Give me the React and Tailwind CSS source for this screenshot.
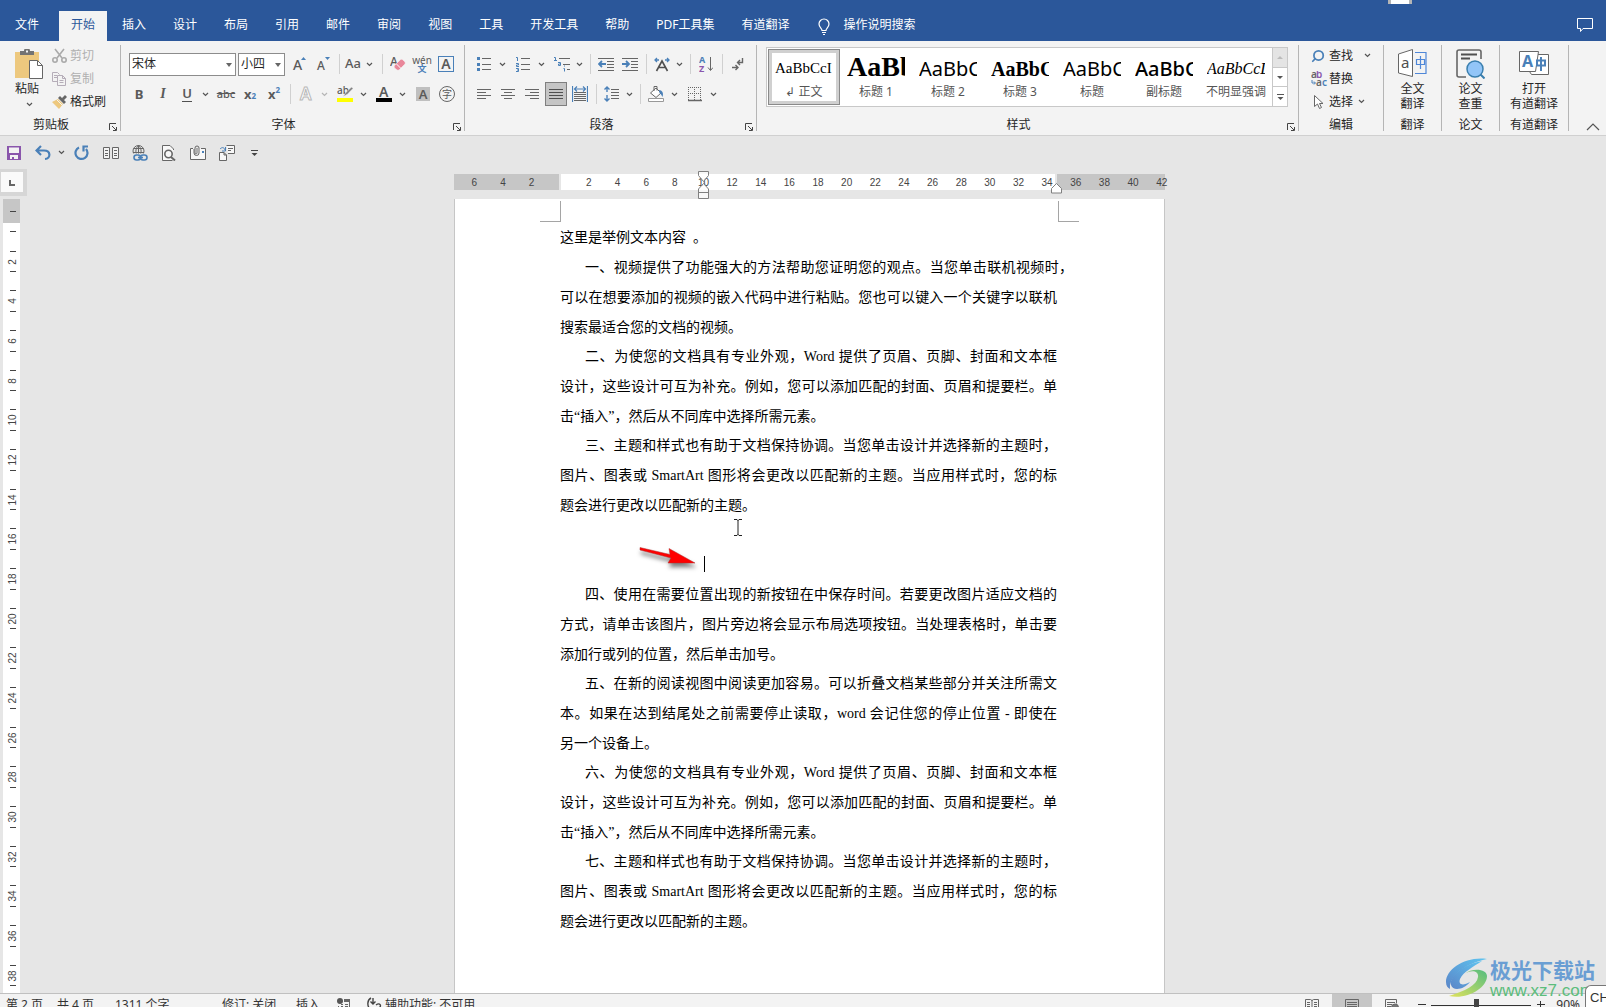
import { Search } from 'lucide-react'

const TABS = ['插入', '设计', '布局', '引用', '邮件', '审阅', '视图', '工具', '开发工具', '帮助', 'PDF工具集', '有道翻译']

const STYLES = [
  { name: '标题 1', sample: 'AaBb', cls: 'font-[Liberation_Serif] font-bold text-[28px] leading-[30px]' },
  { name: '标题 2', sample: 'AaBbC', cls: 'text-xl leading-[34px]' },
  { name: '标题 3', sample: 'AaBbC', cls: 'font-[Liberation_Serif] font-bold text-xl leading-[34px]' },
  { name: '标题', sample: 'AaBbC', cls: 'text-xl leading-[34px]' },
  { name: '副标题', sample: 'AaBbC', cls: 'text-xl leading-[34px] font-medium' },
  { name: '不明显强调', sample: 'AaBbCcL', cls: 'font-[Liberation_Serif] italic text-base leading-[34px] text-[#404040]' },
]

const SECOND = [
  '为使您的文档具有专业外观，Word 提供了页眉、页脚、封面和文本框',
  '设计，这些设计可互为补充。例如，您可以添加匹配的封面、页眉和提要栏。单',
  '击“插入”，然后从不同库中选择所需元素。',
]
const THIRD = [
  '主题和样式也有助于文档保持协调。当您单击设计并选择新的主题时，',
  '图片、图表或 SmartArt 图形将会更改以匹配新的主题。当应用样式时，您的标',
  '题会进行更改以匹配新的主题。',
]

const BEFORE_CARET = [
  [
    '一、视频提供了功能强大的方法帮助您证明您的观点。当您单击联机视频时，',
    '可以在想要添加的视频的嵌入代码中进行粘贴。您也可以键入一个关键字以联机',
    '搜索最适合您的文档的视频。',
  ],
  ['二、' + SECOND[0], SECOND[1], SECOND[2]],
  ['三、' + THIRD[0], THIRD[1], THIRD[2]],
]
const AFTER_CARET = [
  [
    '四、使用在需要位置出现的新按钮在中保存时间。若要更改图片适应文档的',
    '方式，请单击该图片，图片旁边将会显示布局选项按钮。当处理表格时，单击要',
    '添加行或列的位置，然后单击加号。',
  ],
  [
    '五、在新的阅读视图中阅读更加容易。可以折叠文档某些部分并关注所需文',
    '本。如果在达到结尾处之前需要停止读取，word 会记住您的停止位置 - 即使在',
    '另一个设备上。',
  ],
  ['六、' + SECOND[0], SECOND[1], SECOND[2]],
  ['七、' + THIRD[0], THIRD[1], THIRD[2]],
]

const H_MARKS = [6, 4, 2, '', 2, 4, 6, 8, 10, 12, 14, 16, 18, 20, 22, 24, 26, 28, 30, 32, 34, 36, 38, 40, 42]
const V_MARKS = Array.from({ length: 19 }, (_, i) => (i + 1) * 2)

const GRAY = '#666666'
const BLUE = '#4a80b8'
const PURPLE = '#8a56ac'

function Svg({ w = 16, h = 16, children, className = '' }) {
  return (
    <svg width={w} height={h} viewBox={`0 0 ${w} ${h}`} fill="none" stroke={GRAY} className={`shrink-0 ${className}`} aria-hidden="true">
      {children}
    </svg>
  )
}

function Tool({ label, children, className = 'w-6' }) {
  return (
    <button aria-label={label} className={`h-6 shrink-0 flex items-center justify-center text-[#5a5a5a] ${className}`}>
      {children}
    </button>
  )
}

function Caret({ className = 'w-[15px]', color = '#555555' }) {
  return (
    <span className={`shrink-0 flex justify-center pr-0.5 ${className}`}>
      <svg width="7" height="5" viewBox="0 0 7 5" fill="none" stroke={color} strokeWidth="1.2" aria-hidden="true">
        <path d="M1 1l2.500 2.500L6 1" />
      </svg>
    </span>
  )
}

const Sep = () => (
  <span className="w-2 h-5 shrink-0 flex justify-center">
    <span className="w-px bg-[#d0d0d0]" />
  </span>
)

const Divider = () => <div className="w-px my-1 shrink-0 bg-[#b5b5b5]" />

function Group({ label, launcher, className = '', children }) {
  return (
    <section className={`flex flex-col shrink-0 pb-0.5 ${className}`}>
      <div className="flex-1">{children}</div>
      <div className="flex items-center h-4 text-[#262626]">
        <span className="flex-1 text-center whitespace-nowrap">{label}</span>
        {launcher && (
          <button aria-label={`${label}设置`} className="w-[18px] flex justify-end pr-[3px] pt-1">
            <Svg w={8} h={8}>
              <path d="M.5 7V.5H7M3 3l4 4M7.500 4v3.500H4" stroke="#444" />
            </Svg>
          </button>
        )}
      </div>
    </section>
  )
}

function Combo({ label, value, className }) {
  return (
    <div className={`relative h-[23px] ${className}`}>
      <select aria-label={label} defaultValue={value} className="appearance-none w-full h-full bg-white border border-[#8c8c8c] pl-0.5 text-xs text-[#262626] rounded-none">
        <option>{value}</option>
      </select>
      <span className="absolute right-1 top-2.5 border-x-3 border-t-4 border-x-transparent border-t-[#666]" />
    </div>
  )
}

function Lines({ xs, color = GRAY }) {
  return xs.map(([x1, x2, y]) => <path key={y} d={`M${x1} ${y}.5H${x2}`} stroke={color} />)
}

function SmallCommand({ icon, label, caret, disabled }) {
  return (
    <button disabled={disabled} className={`flex items-center h-[23px] whitespace-nowrap ${disabled ? 'text-[#b0b0b0]' : 'text-[#262626]'}`}>
      <span className="w-[18px] flex justify-start">{icon}</span>
      {label}
      {caret}
    </button>
  )
}

function BigCommand({ icon, lines }) {
  return (
    <button className="w-full flex flex-col items-center pt-2 text-[#262626]">
      <span className="h-8 flex items-start">{icon}</span>
      {lines.map((line) => (
        <span key={line} className="leading-[15px] whitespace-nowrap">{line}</span>
      ))}
    </button>
  )
}

function TitleTabs() {
  return (
    <header className="relative shrink-0 flex items-end h-[41px] bg-[#2b579a] text-white">
      <nav className="flex gap-[3px] pl-[3px]">
        <button className="h-[30px] px-3 pb-0.5 mr-[5px]">文件</button>
        <button className="h-[30px] px-3 pb-0.5 bg-[#f3f3f3] text-[#2b579a]">开始</button>
        {TABS.map((tab) => (
          <button key={tab} className="h-[30px] px-3 pb-0.5 whitespace-nowrap">{tab}</button>
        ))}
        <button className="h-[30px] pl-3 pb-0.5 flex items-center gap-[11px] whitespace-nowrap">
          <Svg w={16} h={18} className="mt-1">
            <path d="M6 12.500c0-2-3-3-3-6.500a5 5 0 0 1 10 0c0 3.500-3 4.500-3 6.500zM6 14.500h4M7 16.500h2" stroke="#fff" strokeWidth="1.2" />
          </Svg>
          操作说明搜索
        </button>
      </nav>
      <button aria-label="批注" className="ml-auto mr-3 h-8 flex items-center">
        <Svg w={18} h={16}>
          <path d="M1.500 1.500h15v10H7l-2.500 3v-3h-3z" stroke="#fff" />
        </Svg>
      </button>
      <span className="absolute top-0 right-[194px] w-6 h-1 bg-white border-x-3 border-[#b5b5b5]" />
    </header>
  )
}

function ClipboardGroup() {
  return (
    <Group label="剪贴板" launcher className="w-[120px]">
      <div className="flex">
        <button className="w-[52px] pl-[15px] pt-2 flex flex-col items-start text-[#262626]">
          <Svg w={30} h={31}>
            <path d="M0 3h24v26H0z" fill="#edc87e" stroke="none" />
            <path d="M5 6V2h4a3 3 0 0 1 6 0h4v4z" fill="#737373" stroke="none" />
            <path d="M11 1.500h2v2h-2z" fill="#f3f3f3" stroke="none" />
            <path d="M14.500 11.500h8l5 5v13h-13z" fill="#fff" />
            <path d="M22.500 11.500v5h5" />
          </Svg>
          <span className="leading-[18px]">粘贴</span>
          <Caret className="w-[30px] pt-1" />
        </button>
        <div className="pt-[3px]">
          <SmallCommand
            disabled
            label="剪切"
            icon={
              <Svg>
                <g stroke="#aaa" strokeWidth="1.600">
                  <path d="M3 1l7 9M12 1L5 10" />
                  <circle cx="3" cy="12" r="2.200" />
                  <circle cx="12" cy="12" r="2.200" />
                </g>
              </Svg>
            }
          />
          <SmallCommand
            disabled
            label="复制"
            icon={
              <Svg>
                <path d="M5 10.500H.500V1.500h5l2 2M2 4.500h3M2 6.500h3M5.500 4.500h5l3 3v7h-8zM10.500 4.500v3h3M7.500 9.500h4M7.500 11.500h4" stroke="#b5adb8" />
              </Svg>
            }
          />
          <SmallCommand
            label="格式刷"
            icon={
              <Svg>
                <path d="M0 8l6-3 5 5-4 5z" fill="#edc87e" stroke="none" />
                <path d="M6 4l2-2 6 6-2 2zM10 4l3-3 2 2-3 3z" fill="#666" stroke="none" />
                <path d="M5 6l5 5" stroke="#f3f3f3" />
              </Svg>
            }
          />
        </div>
      </div>
    </Group>
  )
}

function FontGroup() {
  return (
    <Group label="字体" launcher className="w-[343px]">
      <div className="flex items-center h-6 mt-[11px] pl-2">
        <Combo label="字体名称" value="宋体" className="w-[107px] mr-0.5" />
        <Combo label="字号" value="小四" className="w-[47px] mr-0.5" />
        <Tool label="增大字号">
          <Svg>
            <text x="2" y="14" fontSize="14" fontWeight="500" fill="#5a5a5a" stroke="none">A</text>
            <path d="M10 4l2.500-3L15 4z" fill={BLUE} stroke="none" />
          </Svg>
        </Tool>
        <Tool label="减小字号">
          <Svg>
            <text x="2" y="14" fontSize="12" fontWeight="500" fill="#5a5a5a" stroke="none">A</text>
            <path d="M10 1l2.500 3L15 1z" fill={BLUE} stroke="none" />
          </Svg>
        </Tool>
        <Sep />
        <Tool label="更改大小写" className="w-5 text-[13px] font-medium">Aa</Tool>
        <Caret />
        <Sep />
        <Tool label="清除所有格式">
          <Svg>
            <text x="0" y="10" fontSize="12" fontWeight="500" fill="#5a5a5a" stroke="none">A</text>
            <path d="M5 9l5-5c1-1 2-1 3 0l1.500 1.500c1 1 1 2 0 3l-5 5c-1 1-2 1-3 0L4.500 12c-.5-1-.5-2 .5-3z" fill="#e9879a" stroke="#f3f3f3" strokeWidth=".600" />
            <path d="M6.500 8l4.500 4.500" stroke="#fff" />
          </Svg>
        </Tool>
        <Tool label="拼音指南" className="w-6 flex-col">
          <span className="text-[10px] leading-2">wén</span>
          <span className="text-[9px] leading-[9px] font-bold text-[#4a80b8]">文</span>
        </Tool>
        <Tool label="字符边框">
          <span className="w-4 h-4 border border-[#4a80b8] text-sm leading-[14px] font-semibold">A</span>
        </Tool>
      </div>
      <div className="flex items-center h-6 mt-1.5 pl-1.5 text-sm">
        <Tool label="加粗"><b className="text-[13px]">B</b></Tool>
        <Tool label="倾斜"><i className="font-[Liberation_Serif] font-bold">I</i></Tool>
        <Tool label="下划线"><span className="text-[13px] font-semibold border-b border-[#505050] leading-[15px]">U</span></Tool>
        <Caret />
        <Tool label="删除线"><s className="text-[11px] font-medium">abc</s></Tool>
        <Tool label="下标"><b className="text-[13px]">x</b><sub className="text-[8px] text-[#4a80b8] font-bold">2</sub></Tool>
        <Tool label="上标"><b className="text-[13px]">x</b><sup className="text-[8px] text-[#4a80b8] font-bold">2</sup></Tool>
        <Sep />
        <Tool label="文本效果">
          <Svg><text x="2" y="14" fontSize="17" fontWeight="600" fill="#fff" stroke="#b8b8b8">A</text></Svg>
        </Tool>
        <Caret color="#b5b5b5" />
        <Tool label="突出显示">
          <Svg>
            <text x="0" y="8" fontSize="10" fontWeight="500" fill="#5a5a5a" stroke="none">ab</text>
            <path d="M14.500 1L9 6.500l-3 4 4-2L16 2.500z" fill="#808080" stroke="#f3f3f3" strokeWidth=".500" />
            <path d="M0 12h16v4H0z" fill="#ff0" stroke="none" />
          </Svg>
        </Tool>
        <Caret />
        <Tool label="字体颜色">
          <Svg>
            <text x="3" y="11" fontSize="14" fontWeight="600" fill="#5a5a5a" stroke="none">A</text>
            <path d="M0 12h16v4H0z" fill="#000" stroke="none" />
          </Svg>
        </Tool>
        <Caret />
        <Tool label="字符底纹"><span className="w-3.5 h-3.5 bg-[#bfbfbf] text-[13px] leading-[14px] font-semibold">A</span></Tool>
        <Tool label="带圈字符"><span className="w-4 h-4 rounded-full border border-[#666] text-[10px] leading-[14px]">字</span></Tool>
      </div>
    </Group>
  )
}

function ParagraphGroup() {
  return (
    <Group label="段落" launcher className="w-[291px]">
      <div className="flex items-center h-6 mt-[11px] pl-[7px]">
        <Tool label="项目符号">
          <Svg w={14}>
            <Lines xs={[[5, 14, 2], [5, 14, 8], [5, 14, 13]]} />
            <path d="M0 1h3v3H0zM0 7h3v3H0zM0 12h3v3H0z" fill={BLUE} stroke="none" />
          </Svg>
        </Tool>
        <Caret />
        <Tool label="编号">
          <Svg w={14}>
            <Lines xs={[[5, 14, 2], [5, 14, 8], [5, 14, 13]]} />
            <path d="M0 1.500h1.500V5M0 7.500h2.500v1.500H.500v1.500h2.500M0 12.500h2.500v3H0M1 14h1.500" stroke={BLUE} />
          </Svg>
        </Tool>
        <Caret />
        <Tool label="多级列表">
          <Svg>
            <Lines xs={[[5, 16, 2], [9, 16, 8], [13, 16, 13]]} />
            <path d="M0 1.500h1.500V4.500M0 4.500h3M4 6.500h2.500v3H4.500V8h2M10.500 9.500v1M9.500 12.500h1v3" stroke={BLUE} />
          </Svg>
        </Tool>
        <Caret className="w-3" />
        <Sep />
        <Tool label="减少缩进量">
          <Svg>
            <Lines xs={[[0, 16, 2], [9, 16, 5], [9, 16, 8], [9, 16, 11], [0, 16, 14]]} />
            <path d="M8 8H1M4 5L1 8l3 3" stroke={BLUE} strokeWidth="1.800" />
          </Svg>
        </Tool>
        <Tool label="增加缩进量">
          <Svg>
            <Lines xs={[[0, 16, 2], [9, 16, 5], [9, 16, 8], [9, 16, 11], [0, 16, 14]]} />
            <path d="M0 8h7M4 5l3 3-3 3" stroke={BLUE} strokeWidth="1.800" />
          </Svg>
        </Tool>
        <Sep />
        <Tool label="中文版式">
          <Svg>
            <path d="M5 4H1M3 2L1 4l2 2M11 4h4M13 2l2 2-2 2" stroke={BLUE} strokeWidth="1.300" />
            <path d="M2.500 15L8 5l5.500 10M5 11.500h6" stroke="#505050" strokeWidth="1.600" />
          </Svg>
        </Tool>
        <Caret className="w-3" />
        <Sep />
        <Tool label="排序">
          <Svg w={14}>
            <text x="0" y="7" fontSize="9" fontWeight="700" fill={BLUE} stroke="none">A</text>
            <text x="0" y="16" fontSize="9" fontWeight="700" fill={PURPLE} stroke="none">Z</text>
            <path d="M11.500 1v13M9 11.500l2.500 3 2.500-3" />
          </Svg>
        </Tool>
        <Sep />
        <Tool label="显示编辑标记">
          <Svg w={12}>
            <path d="M10.500 2v4.500H6M8 4L5.500 6.500 8 9M0 11.500h6M3.500 9L6 11.500 3.500 14" strokeWidth="1.400" />
          </Svg>
        </Tool>
      </div>
      <div className="flex items-center h-6 mt-1.5 pl-[7px]">
        <Tool label="左对齐"><Svg w={14}><Lines xs={[[0, 14, 3], [0, 9, 6], [0, 14, 9], [0, 9, 12]]} /></Svg></Tool>
        <Tool label="居中"><Svg w={14}><Lines xs={[[0, 14, 3], [3, 11, 6], [0, 14, 9], [3, 11, 12]]} /></Svg></Tool>
        <Tool label="右对齐"><Svg w={14}><Lines xs={[[0, 14, 3], [5, 14, 6], [0, 14, 9], [5, 14, 12]]} /></Svg></Tool>
        <Tool label="两端对齐" className="w-[22px] mx-px bg-[#c5c5c5] border border-[#7f7f7f]">
          <Svg w={14}><Lines xs={[[0, 14, 3], [0, 14, 6], [0, 14, 9], [0, 14, 12]]} color="#505050" /></Svg>
        </Tool>
        <Tool label="分散对齐">
          <Svg>
            <path d="M.500 0v16M15.500 0v16M2 3h12M5 .500L2.500 3 5 5.500M11 .500L13.500 3 11 5.500" stroke={BLUE} strokeWidth="1.200" />
            <Lines xs={[[2, 14, 6], [2, 14, 8], [2, 14, 10], [2, 14, 12], [2, 14, 14]]} />
          </Svg>
        </Tool>
        <Sep />
        <Tool label="行距">
          <Svg>
            <path d="M3 1v5M.500 3.500L3 1l2.500 2.500M3 9v6M.500 12.500L3 15l2.500-2.500" stroke={BLUE} strokeWidth="1.400" />
            <Lines xs={[[7, 15, 3], [7, 15, 6], [7, 15, 9], [7, 15, 12]]} />
          </Svg>
        </Tool>
        <Caret className="w-3" />
        <Sep />
        <Tool label="底纹">
          <Svg>
            <path d="M2.500 7L8 2l5 5-5 4.500zM6 5V.500h3v4" fill="#fff" />
            <path d="M11 4c3 0 5 3 3.500 7-1-1-1-3-3-4z" fill={BLUE} stroke="none" />
            <path d="M.500 12.500h15v3H.500z" fill="#fff" stroke="#999" />
          </Svg>
        </Tool>
        <Caret />
        <Tool label="边框">
          <Svg w={14}>
            <path d="M.500 1v13M6.500 1v13M12.500 1v13M0 1.500h13M0 7.500h13" strokeDasharray="1 1" />
            <path d="M0 14.500h14" strokeWidth="1.500" />
          </Svg>
        </Tool>
        <Caret />
      </div>
    </Group>
  )
}

function StyleGroup() {
  return (
    <Group label="样式" launcher className="w-[541px]">
      <div className="flex h-[60px] mt-1.5 ml-[9px] mr-[10px] bg-white border border-[#c8c8c8] text-[#555]">
        <button className="w-[72px] shrink-0 px-[3px] pb-0.5 my-px ml-px border border-[#8a8a8a] ring-3 ring-inset ring-[#d0d0d0]">
          <span className="block w-[58px] h-8 ml-[3px] overflow-hidden whitespace-nowrap text-left font-[Liberation_Serif] text-[15px] leading-8 text-black">AaBbCcI</span>
          <span className="block leading-4">↲ 正文</span>
        </button>
        {STYLES.map(({ name, sample, cls }) => (
          <button key={name} className="w-[72px] shrink-0 px-[7px] pb-0.5">
            <span className={`block h-8 overflow-hidden whitespace-nowrap text-left text-black ${cls}`}>{sample}</span>
            <span className="flex justify-center leading-4 whitespace-nowrap">{name}</span>
          </button>
        ))}
        <div className="flex-1 flex flex-col border-l border-[#c8c8c8]">
          <button aria-label="上一行" className="flex-1 flex items-center justify-center bg-[#e4e4e4]">
            <Svg w={6} h={3}><path d="M0 3l3-3 3 3z" fill="#bbb" stroke="none" /></Svg>
          </button>
          <button aria-label="下一行" className="flex-1 flex items-center justify-center border-y border-[#c8c8c8]">
            <Svg w={6} h={3}><path d="M0 0l3 3 3-3z" fill="#555" stroke="none" /></Svg>
          </button>
          <button aria-label="其他" className="flex-1 flex items-center justify-center">
            <Svg w={7} h={6}><path d="M.500 3l3 3 3-3z" fill="#555" stroke="none" /><path d="M0 .500h7" stroke="#555" /></Svg>
          </button>
        </div>
      </div>
    </Group>
  )
}

function EditGroup() {
  return (
    <Group label="编辑" className="w-[84px]">
      <div className="pl-3 pt-[3px]">
        <SmallCommand label="查找" icon={<Search size={14} strokeWidth={3} color={BLUE} className="-scale-x-100" />} caret={<Caret className="w-[30px]" />} />
        <SmallCommand
          label="替换"
          icon={
            <Svg w={17}>
              <g fontSize="10" fontWeight="600" stroke="none">
                <text x="0" y="7" fill="#666">a</text><text x="5" y="7" fill={PURPLE}>b</text>
                <text x="5" y="15" fill="#666">a</text><text x="11" y="15" fill={BLUE}>c</text>
              </g>
              <path d="M1 9v3h3M3 10.500L4.500 12 3 13.500" stroke={BLUE} />
            </Svg>
          }
        />
        <SmallCommand
          label="选择"
          icon={<Svg><path d="M3.500 1.500v11l3-2.500 2 4.500 2-1-2-4h3.500z" fill="#fff" /></Svg>}
          caret={<Caret className="w-[18px]" />}
        />
      </div>
    </Group>
  )
}

function Ribbon() {
  return (
    <div className="flex shrink-0 h-[95px] bg-[#f3f3f3] border-b border-[#d0d0d0]">
      <ClipboardGroup />
      <Divider />
      <FontGroup />
      <Divider />
      <ParagraphGroup />
      <Divider />
      <StyleGroup />
      <Divider />
      <EditGroup />
      <Divider />
      <Group label="翻译" className="w-[57px]">
        <BigCommand
          lines={['全文', '翻译']}
          icon={
            <Svg w={29} h={29}>
              <path d="M.500 5l14-4.500v27L.500 24z" fill="#fff" />
              <text x="3" y="19" fontSize="15" fill="#505050" stroke="none">a</text>
              <path d="M17 3.500h11v21H17M18.500 10.500h8v5h-8zM22.500 7v13" stroke="#4f87d8" strokeWidth="1.200" />
            </Svg>
          }
        />
      </Group>
      <Divider />
      <Group label="论文" className="w-[57px]">
        <BigCommand
          lines={['论文', '查重']}
          icon={
            <Svg w={29} h={30}>
              <path d="M10 28H3a2 2 0 0 1-2-2V3a2 2 0 0 1 2-2h20a2 2 0 0 1 2 2v7" strokeWidth="1.600" />
              <path d="M5 5.500h16M5 9.500h9" stroke="#505050" strokeWidth="1.800" />
              <circle cx="19" cy="20" r="8" fill="#92c5f8" stroke="#3a7fae" strokeWidth="1.500" />
              <path d="M24.500 25.500l4 4" stroke="#3a7fae" strokeWidth="2" />
            </Svg>
          }
        />
      </Group>
      <Divider />
      <Group label="有道翻译" className="w-[68px]">
        <BigCommand
          lines={['打开', '有道翻译']}
          icon={
            <Svg w={30} h={28}>
              <path d="M12.500 5.500h17v20h-17l-2-3z" fill="#fff" />
              <path d="M.500 2.500h19l-3 20H.500z" fill="#fff" />
              <text x="3" y="18" fontSize="16" fontWeight="700" fill={BLUE} stroke="none">A</text>
              <path d="M18 11.500h8v5h-8zM22 8v14" stroke={BLUE} strokeWidth="2" />
            </Svg>
          }
        />
      </Group>
      <Divider />
      <button aria-label="折叠功能区" className="ml-auto mr-1.5 self-end pb-1">
        <Svg w={14} h={8}><path d="M1 7l6-6 6 6" stroke="#555" strokeWidth="1.200" /></Svg>
      </button>
    </div>
  )
}

function QuickAccess() {
  return (
    <div className="flex shrink-0 items-center h-[33px]">
      <Tool label="保存" className="w-7">
        <Svg w={14} h={14}>
          <path d="M0 0h14v14H0z" fill={PURPLE} stroke="none" />
          <path d="M2 1.500h10V7H2zM3 9h8v4H3z" fill="#f3f3f3" stroke="none" />
          <path d="M5 11h2v3H5z" fill={PURPLE} stroke="none" />
        </Svg>
      </Tool>
      <Tool label="撤消" className="w-[29px]">
        <Svg><path d="M6 1L1.500 5.500 6 10M2 5.500h7c7 0 7 8 1 8.500" stroke={BLUE} strokeWidth="2.200" /></Svg>
      </Tool>
      <Caret className="w-[10px]" />
      <Tool label="重复" className="w-[29px]">
        <Svg><path d="M5 2.500A6 6 0 1 0 12 4M9.500 6.500V1.500H14" stroke={BLUE} strokeWidth="2.200" /></Svg>
      </Tool>
      <Tool label="阅读视图" className="w-[29px]">
        <Svg h={12}><path d="M.500.500h6v11h-6zM9.500.500h6v11h-6zM2 3.500h3M2 6.500h3M2 8.500h3M11 3.500h3M11 6.500h3M11 8.500h3" fill="#f3f3f3" /></Svg>
      </Tool>
      <Tool label="超链接" className="w-[29px]">
        <Svg>
          <circle cx="6.500" cy="6" r="5.500" />
          <path d="M1.500 3.500h10M1 7.500h11M6.500.500v9M6.500.500C3.500 3 3.500 7 4.500 9M6.500.500c3 2.500 3 6.500 2 8.500" />
          <path d="M1 8.500h15V16H1z" fill="#e6e6e6" stroke="none" />
          <rect x="2" y="10" width="6.500" height="5" rx="2.500" stroke={BLUE} strokeWidth="1.600" />
          <rect x="8.500" y="10" width="6.500" height="5" rx="2.500" stroke={BLUE} strokeWidth="1.600" />
          <path d="M6 12.500h5" stroke={BLUE} strokeWidth="1.600" />
        </Svg>
      </Tool>
      <Tool label="打印预览" className="w-[29px]">
        <Svg>
          <path d="M12.500 5V4L9 .500H1.500v15h10" fill="#f8f8f8" />
          <circle cx="7.500" cy="9" r="3.700" strokeWidth="1.600" fill="#f8f8f8" />
          <path d="M10 12l4 3.500" strokeWidth="2" />
        </Svg>
      </Tool>
      <Tool label="邮件附件" className="w-[29px]">
        <Svg>
          <path d="M3 3.500H.500v11h15v-11H11" fill="#f8f8f8" />
          <path d="M4 4v4a2.500 2.500 0 0 0 5 0V3a2 2 0 0 0-4 0v5a1 1 0 0 0 2 0V3" />
          <path d="M12 6h2v2h-2z" fill={BLUE} stroke="none" />
        </Svg>
      </Tool>
      <Tool label="切换窗口" className="w-[29px]">
        <Svg>
          <path d="M7.500.500h8v8H9M9 3.500h5M9 5.500h3M.500 7.500H5l2.500 2.500v5.500h-7zM5 7.500V10h2.500" fill="#f8f8f8" />
          <path d="M1 4c2-2 4-2 5 1M6.500 2v4H3" stroke={BLUE} />
        </Svg>
      </Tool>
      <Tool label="自定义快速访问工具栏" className="w-[27px]">
        <Svg w={7} h={6}><path d="M0 .500h7" stroke="#444" /><path d="M.500 3h6l-3 3z" fill="#444" stroke="none" /></Svg>
      </Tool>
    </div>
  )
}

function HorizontalRuler() {
  return (
    <div className="relative flex gap-0.5 h-4 mt-[5px] text-[10px] leading-[18px] text-[#444] font-[Liberation_Sans]">
      <div className="w-[105px] bg-[#c6c6c6]" />
      <div className="flex-1 bg-white" />
      <div className="w-[108px] bg-[#c6c6c6]" />
      <div className="absolute inset-y-0 left-1.5 -right-[11px] flex">
        {H_MARKS.map((n, i) => (
          <span key={i} className="flex-1 w-0 text-center">{n}</span>
        ))}
      </div>
      <Svg w={12} h={29} className="absolute left-[244px] -top-[3px]">
        <path d="M.500.500h10v4l-5 6-5-6z" fill="#fff" fillOpacity=".7" stroke="#808080" />
        <path d="M5.500 12.500l5 5.500v9.500h-10V18zM.500 21.500h10" fill="#fff" fillOpacity=".7" stroke="#808080" />
      </Svg>
      <Svg w={12} h={12} className="absolute left-[597px] top-[9px]">
        <path d="M5.500.500l5 5v4.500h-10V5.500z" fill="#fff" stroke="#808080" />
      </Svg>
    </div>
  )
}

function VerticalRuler() {
  return (
    <div className="flex flex-col shrink-0 w-[27px] overflow-hidden">
      <button aria-label="制表符" className="shrink-0 flex items-start w-[27px] h-[27px] bg-[#d6d6d6] pt-[3px] pl-px">
        <span className="flex items-center justify-center w-[22px] h-5 bg-[#fafafa]">
          <Svg w={6} h={6} className="mt-0.5"><path d="M1 0v5h5" stroke="#666" strokeWidth="2" /></Svg>
        </span>
      </button>
      <div className="flex-1 min-h-0 flex flex-col w-[17px] mt-[3px] ml-[3px] overflow-hidden bg-white text-[#444] font-[Liberation_Sans]">
        <div className="shrink-0 h-6 flex items-center justify-center bg-[#c6c6c6] pl-[3px] mb-2">
          <span className="w-1.5 h-px bg-[#444]" />
        </div>
        <div className="shrink-0 h-[11px] flex justify-center pl-[3px]">
          <span className="w-1.5 h-px bg-[#444]" />
        </div>
        {V_MARKS.map((n) => (
          <div key={n} className="shrink-0 h-10 nth-[3n]:h-[39px] flex flex-col items-center justify-between py-[9px] pl-[3px]">
            <span className="w-1.5 h-px bg-[#444]" />
            <span className="text-[10px] leading-3 -rotate-90">{n}</span>
            <span className="w-1.5 h-px bg-[#444]" />
          </div>
        ))}
      </div>
    </div>
  )
}

// Full lines are justified, the last line of a paragraph keeps its own width
function Paragraph({ lines }) {
  return (
    <p>
      {lines.map((line, i) => (
        <span
          key={i}
          className={`block whitespace-nowrap ${i === 0 ? 'pl-[25px]' : ''} ${
            i === lines.length - 1 ? 'leading-[29px]' : '[text-align-last:justify]'
          } ${line.startsWith('一') ? '-mr-4' : ''}`}
        >
          {line}
        </span>
      ))}
    </p>
  )
}

function Page() {
  return (
    <article className="relative flex-1 mt-[9px] bg-white border-x border-[#c6c6c6] text-black">
      <div className="flex justify-between h-6 pt-0.5 px-[85px]">
        <span className="w-[21px] h-[21px] border-r border-b border-[#a5a5a5]" />
        <span className="w-[21px] h-[21px] border-l border-b border-[#a5a5a5]" />
      </div>
      <div className="pl-[105px] pr-[107px] text-sm leading-[30px] font-['Liberation_Serif','Noto_Sans_CJK_SC',serif]">
        <p>这里是举例文本内容&nbsp; 。</p>
        {BEFORE_CARET.map((lines, i) => <Paragraph key={i} lines={lines} />)}
        <div className="h-[60px] pt-9 pl-[144px]">
          <div className="w-px h-4 bg-black" />
        </div>
        {AFTER_CARET.map((lines, i) => <Paragraph key={i} lines={lines} />)}
      </div>
      <svg width="66" height="32" viewBox="0 0 66 32" className="absolute left-[182px] top-[346px] drop-shadow-[1px_4px_2px_rgba(0,0,0,0.5)]" aria-hidden="true">
        <path d="M3 2.500l30 7-1-6L58 18l-27 0 3-5L3 5z" fill="#f00" stroke="#a33" strokeWidth=".5" />
      </svg>
      <Svg w={8} h={17} className="absolute left-[279px] top-[320px]">
        <path d="M0 .500h3l1 1 1-1h3M0 16.500h3l1-1 1 1h3M4 1v15" stroke="#222" />
      </Svg>
    </article>
  )
}

function StatusBar() {
  return (
    <footer className="shrink-0 h-[14px] overflow-hidden bg-[#f3f3f3] border-t border-[#c0c0c0] text-[#333]">
      <div className="flex items-center h-[22px] whitespace-nowrap">
        <span className="w-[51px] pl-1.5">第 2 页</span>
        <span className="w-[58px] pl-1.5">共 4 页</span>
        <span className="w-[107px] pl-1.5">1311 个字</span>
        <span className="w-[74px] pl-1.5">修订: 关闭</span>
        <span className="w-[47px] pl-1.5">插入</span>
        <Svg w={14} h={14}>
          <circle cx="3" cy="3" r="3" fill="#555" stroke="none" />
          <path d="M7 1.500h5.500v11h-11V8M4 6.500h2M8 6.500h3M4 8.500h2M8 8.500h3M4 10.500h2M8 10.500h3" stroke="#666" />
          <path d="M7 1h6v3H7z" fill="#666" stroke="none" />
        </Svg>
        <span className="flex items-center gap-0.5 ml-4">
          <Svg>
            <path d="M4 1C0 3 0 9 3 12M6 1v6M3.500 4.500L6 7l2.500-2.500M9 8c4-3 6 1 3 3-1 1-1 1-1 3" stroke="#444" strokeWidth="1.400" />
          </Svg>
          辅助功能: 不可用
        </span>
        <div className="ml-auto flex items-center h-full pr-[26px]">
          <Tool label="阅读视图" className="w-10">
            <Svg w={14} h={14}><path d="M.500 1.500h5l1.500 1 1.500-1h5v11h-5L7 13l-1.500-.500h-5zM7 2v11M2 4.500h3M2 6.500h3M2 8.500h3M9 4.500h3M9 6.500h3M9 8.500h3" /></Svg>
          </Tool>
          <Tool label="页面视图" className="w-10 bg-[#c6c6c6]">
            <Svg w={14} h={14}><path d="M.500 1.500h13v12H.500zM2 4.500h10M2 6.500h10M2 8.500h10M2 10.500h10" /></Svg>
          </Tool>
          <Tool label="Web 版式视图" className="w-10">
            <Svg w={14} h={14}>
              <path d="M6 12.500H.500v-11h11v4M2 4.500h8M2 6.500h5M2 8.500h4" />
              <circle cx="10" cy="9.500" r="3.500" fill="#777" />
            </Svg>
          </Tool>
          <Tool label="缩小" className="w-[19px]"><Svg w={8} h={8}><path d="M0 3.500h8" stroke="#333" /></Svg></Tool>
          <input
            type="range"
            aria-label="显示比例"
            min="10"
            max="190"
            defaultValue="90"
            className="appearance-none w-[100px] h-px bg-[#333] [&::-webkit-slider-thumb]:appearance-none [&::-webkit-slider-thumb]:w-[5px] [&::-webkit-slider-thumb]:h-3 [&::-webkit-slider-thumb]:bg-[#444]"
          />
          <Tool label="放大" className="w-[19px]"><Svg w={8} h={8}><path d="M0 3.500h8M3.500 0v8" stroke="#333" /></Svg></Tool>
          <span className="pl-1.5">90%</span>
        </div>
      </div>
    </footer>
  )
}

function Watermark() {
  return (
    <div className="absolute right-[11px] bottom-2 flex items-center gap-0.5">
      <svg width="42" height="42" viewBox="0 0 42 42" aria-hidden="true">
        <defs>
          <linearGradient id="sweep" x1="0" y1="1" x2="1" y2="0">
            <stop offset="0" stopColor="#5b86c8" />
            <stop offset="1" stopColor="#5ec4f0" />
          </linearGradient>
          <linearGradient id="leaf" x1="0" y1="1" x2="1" y2="0">
            <stop offset="0" stopColor="#e0e25c" />
            <stop offset="1" stopColor="#55bd80" />
          </linearGradient>
        </defs>
        <path d="M41 2C20-1 0 12 0 25c0 4 2 6 4 7C3 20 17 7 41 2z" fill="url(#sweep)" />
        <path d="M36 4C18 7 3 19 5 28c2 7 14 4 19-3-7 4-12 3-10-3C17 15 27 10 36 4z" fill="url(#sweep)" />
        <path d="M18 17c8-5 15-3 14 3C31 28 19 34 3 39c18 4 38-8 38-20 0-7-14-9-23-2z" fill="url(#leaf)" />
      </svg>
      <div className="text-[21px] leading-[26px] font-bold text-[#6a9ed3]">
        <p>极光下载站</p>
        <p className="text-[17px] leading-4 font-medium text-[#5cbd7c] font-[Liberation_Sans]">www.xz7.com</p>
      </div>
    </div>
  )
}

export default function App() {
  return (
    <div className="relative h-screen flex flex-col overflow-hidden bg-[#e6e6e6] text-xs font-['Noto_Sans','Noto_Sans_CJK_SC',sans-serif]">
      <TitleTabs />
      <Ribbon />
      <QuickAccess />
      <main className="flex-1 min-h-0 flex overflow-hidden">
        <VerticalRuler />
        <div className="flex-1 flex justify-center pr-[14px]">
          <div className="w-[711px] flex flex-col">
            <HorizontalRuler />
            <Page />
          </div>
        </div>
      </main>
      <StatusBar />
      <Watermark />
      <div className="absolute right-0 bottom-0 w-[21px] h-[22px] pl-1 overflow-hidden rounded-tl-md border-t border-l border-[#777] bg-white text-[13px] leading-6 text-[#333] font-[Liberation_Sans]">CH</div>
    </div>
  )
}
